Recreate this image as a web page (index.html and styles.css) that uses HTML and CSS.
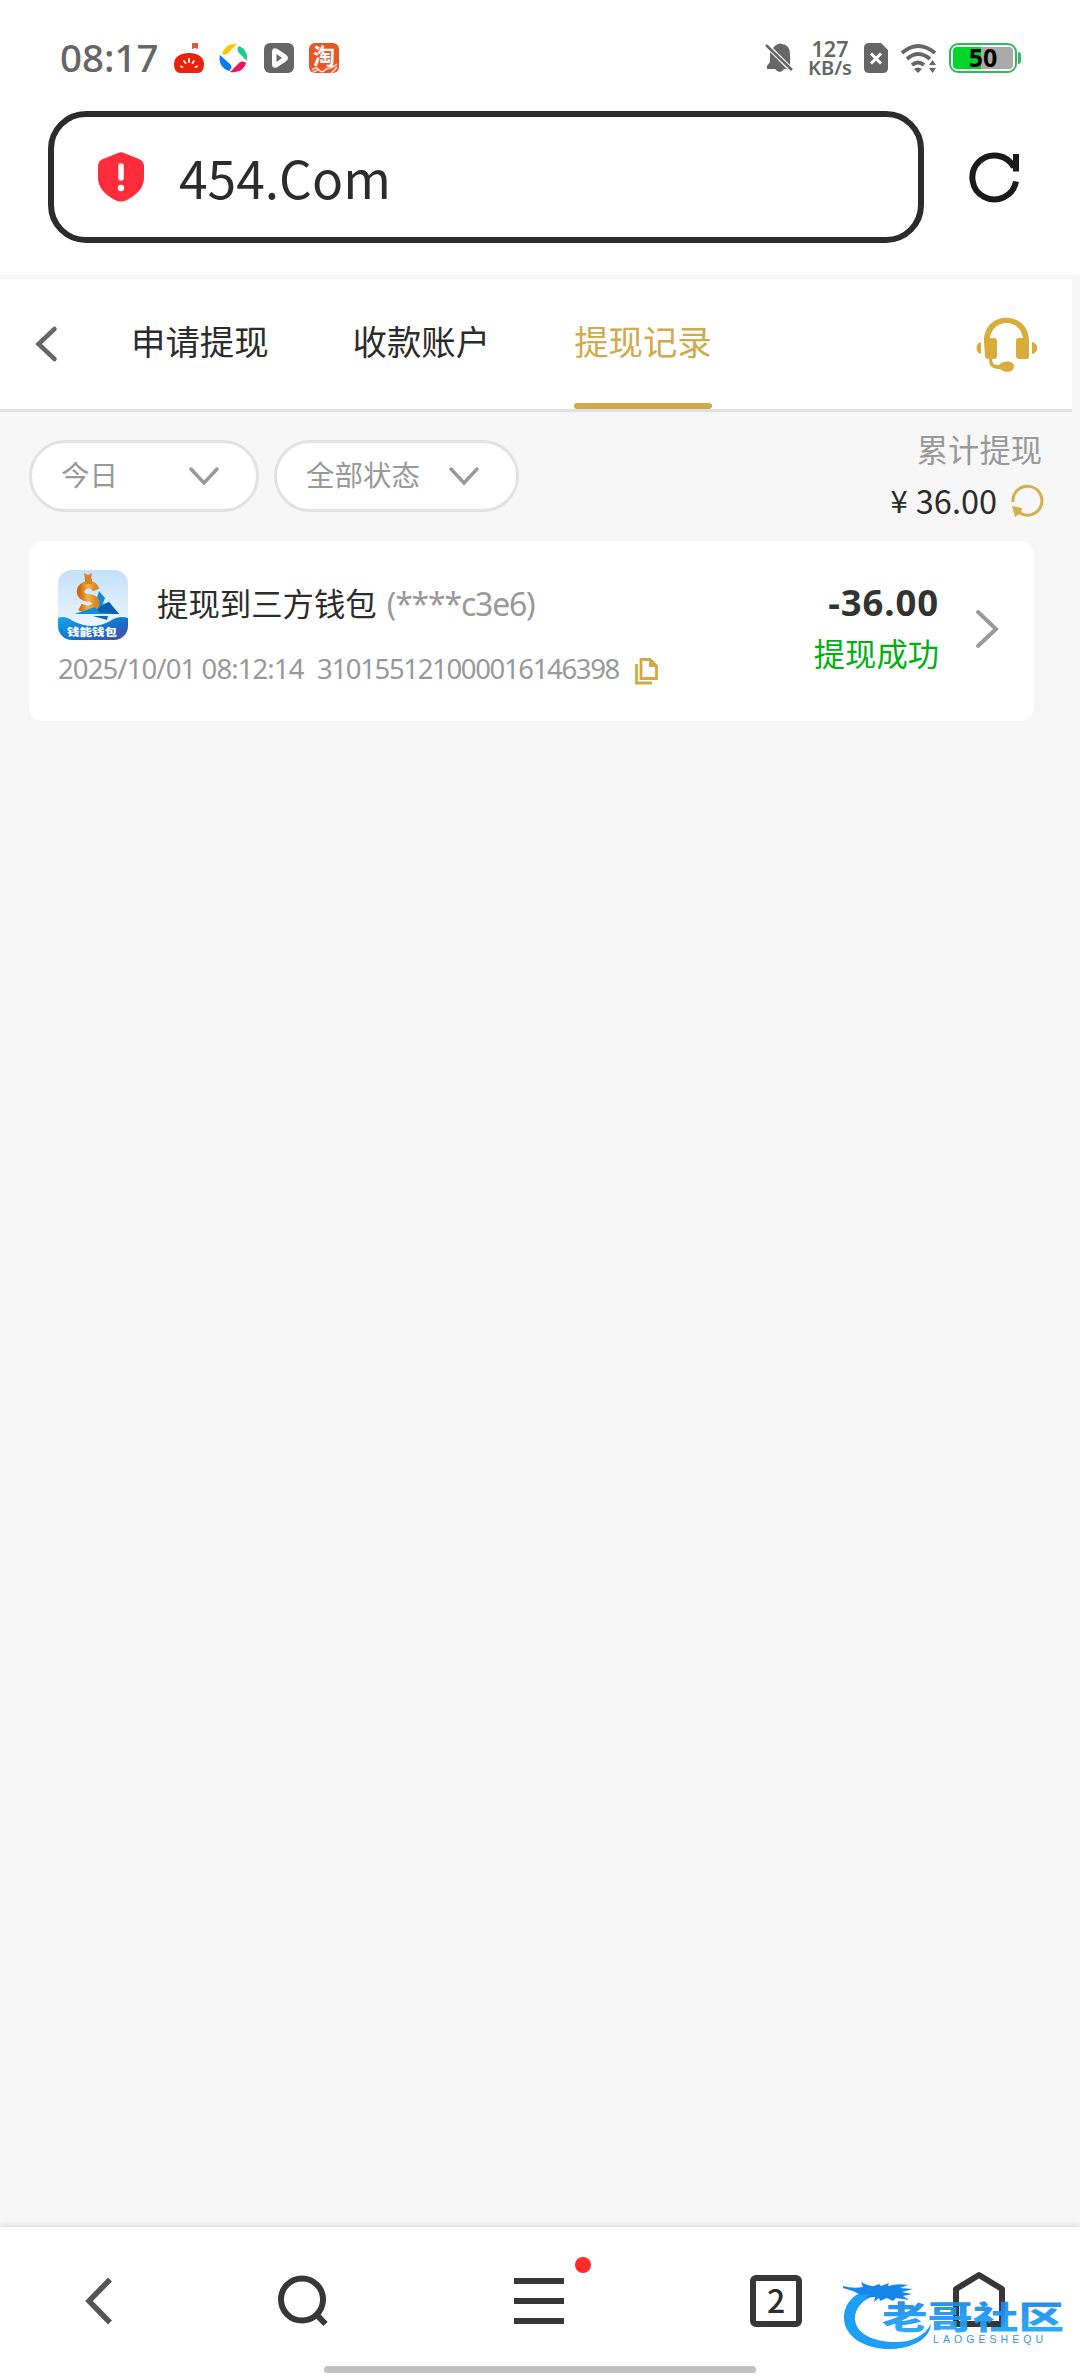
FILE: index.html
```
<!DOCTYPE html>
<html lang="zh-CN">
<head>
    <meta charset="UTF-8">
    <title>提现记录</title>
    <link rel="stylesheet" href="styles.css">
</head>
<body>
    <div class="status-bar">
        <span class="time">08:17</span>
        <div class="apps">
            <svg width="30" height="30" viewBox="0 0 30 30">
                <path d="M18 0h6v6l-3-1-3 1z" fill="#d9573a"/>
                <path d="M15 10c9 0 15 4 15 11 0 5-2 9-6 9H6c-4 0-6-4-6-9 0-7 6-11 15-11z" fill="#e8240c"/>
                <path d="M15 16v3M10 18l1.500 2M20 18l-1.500 2M7 23.500l1.500.5M23 23.500l-1.500.5" stroke="#fff" stroke-width="1.800" stroke-linecap="round"/>
            </svg>
            <svg width="30" height="30" viewBox="0 0 30 30">
                <path d="M3 11C5 4 11 0 18 1L9 10c-2 2-4 2-6 1z" fill="#fdc600"/>
                <path d="M20 3c6 2 9 8 8 15l-8-8c-2-2-2-5 0-7z" fill="#1fc98b"/>
                <path d="M27 20c-2 7-8 10-16 9l9-9c2-2 5-2 7 0z" fill="#f5145b"/>
                <path d="M1 12c-2 7 2 14 9 16 3-2 3-5 1-7z" fill="#0b7cf0"/>
            </svg>
            <svg width="30" height="30" viewBox="0 0 30 30">
                <rect width="30" height="30" rx="6" fill="#666"/>
                <path d="M10 8.500v13q0 2 2 1l9-6q2-1.500 0-3L12 7.500q-2-1-2 1z" fill="#fff" stroke="#fff" stroke-width="4" stroke-linejoin="round"/>
                <path d="M12.500 11v8l5.500-4z" fill="#666"/>
            </svg>
            <svg width="30" height="30" viewBox="0 0 30 30">
                <rect width="30" height="30" rx="6" fill="#ed5426"/>
                <text x="4" y="21" class="tao">淘</text>
                <path d="M3 27q4-4 7 0t7-1q7-1 11-5M22 30q4-3 6-6M4 29l5-2" fill="none" stroke="#fbe0d0" stroke-width="1.500"/>
            </svg>
        </div>
        <div class="signals">
            <svg width="28" height="30" viewBox="0 0 28 30">
                <path d="M12 1q2-1 4 0 8 1 8 10v11L7 5q2-3 5-4zM4 9l17 17h-3q-4 6-9 0H1v-3l3-4z" fill="#666"/>
                <path d="M0 2l26 25" stroke="#666" stroke-width="2.500"/>
            </svg>
            <div class="speed"><span>127</span><span>KB/s</span></div>
            <svg width="24" height="30" viewBox="0 0 24 30">
                <path d="M5 0h12l7 7v18q0 5-5 5H5q-5 0-5-5V5q0-5 5-5z" fill="#666"/>
                <path d="M7 10.500l10 10m0-10l-10 10" stroke="#fff" stroke-width="3"/>
            </svg>
            <svg width="37" height="30" viewBox="0 0 37 30" fill="none" stroke="#666" stroke-width="4">
                <path d="M2 10q16-14 33 0M7 16q11-10 23 0M12 22q6-5 12 0"/>
                <path d="M14 26q4-3 8 0l-4 4zM29 22h7l-3.500-5zM29 25h7l-3.500 5z" fill="#666" stroke="none"/>
            </svg>
            <svg width="73" height="30" viewBox="0 0 73 30">
                <rect x="1" y="1" width="66" height="28" rx="8" fill="#fff" stroke="#2fba5c" stroke-width="2"/>
                <path d="M8 4h24v22H8q-4 0-4-4V8q0-4 4-4z" fill="#00d52b"/>
                <path d="M32 4h28q4 0 4 4v14q0 4-4 4H32z" fill="#aaa"/>
                <path d="M69 9q3 0 3 3v6q0 3-3 3z" fill="#2fba5c"/>
                <text x="34" y="23.500" class="battery">50</text>
            </svg>
        </div>
    </div>

    <div class="address-bar">
        <div class="url">
            <svg width="46" height="50" viewBox="0 0 46 50">
                <path d="M20 1q3-1.500 6 0l15 6q5 2 5 7v12q0 13-17 22-6 3-12 0Q0 39 0 26V14q0-5 5-7z" fill="#ff2d3b"/>
                <path d="M23 14v12" stroke="#fff" stroke-width="5.500" stroke-linecap="round"/>
                <circle cx="23" cy="36" r="3.200" fill="#fff"/>
            </svg>
            <span>454.Com</span>
        </div>
        <svg class="reload" width="50" height="50" viewBox="0 0 50 50" fill="none" stroke="#1a1a1a" stroke-width="6">
            <path d="M46 29.500A22 22 0 1 1 44 15.500"/>
            <path d="M46 2v17.500"/>
        </svg>
    </div>

    <header>
        <svg class="back" width="22" height="36" viewBox="0 0 22 36" fill="none" stroke="#666" stroke-width="4.500" stroke-linecap="round">
            <path d="M18.500 3L2.500 18l16 15"/>
        </svg>
        <nav>
            <a>申请提现</a>
            <a>收款账户</a>
            <a class="active">提现记录</a>
        </nav>
        <svg class="service" width="62" height="56" viewBox="0 0 62 56" fill="#d9ac3c">
            <path d="M8 24C8-7 53-7 53 24v15q0 3-3 3h-7q-3 0-3-3V24q0-3 3-3h4C44 1 17 1 14 21h4q3 0 3 3v15q0 3-3 3h-2c0 5 3 6 7 6 7-6 15-3 15 1 0 6-8 8-14 3-7 0-11-2-11-10-3 0-4-1-4-3z"/>
            <path d="M5 25v12c-6-1-6-11 0-12zM56 25v12c7-1 7-11 0-12z"/>
        </svg>
    </header>

    <main>
        <div class="toolbar">
            <div class="select day">
                <span>今日</span>
                <svg width="30" height="18" viewBox="0 0 30 18"><path d="M2 2l13 14L28 2"/></svg>
            </div>
            <div class="select state">
                <span>全部状态</span>
                <svg width="30" height="18" viewBox="0 0 30 18"><path d="M2 2l13 14L28 2"/></svg>
            </div>
            <div class="summary">
                <span class="label">累计提现</span>
                <div class="total">
                    <span class="yen">¥</span><span>36.00</span>
                    <svg width="32" height="32" viewBox="0 0 32 32">
                        <path d="M2 17A14.500 14.500 0 1 1 8 27.500" fill="none" stroke="#d4af4e" stroke-width="3"/>
                        <path d="M1 21l10 2-1 5-6 4z" fill="#d4af4e"/>
                    </svg>
                </div>
            </div>
        </div>

        <div class="record">
            <div class="info">
                <div class="title">
                    <svg width="70" height="70" viewBox="0 0 70 70">
                        <defs>
                            <linearGradient id="sky" x2="0" y2="1"><stop stop-color="#c3e0fb"/><stop offset="1" stop-color="#f6fbff"/></linearGradient>
                            <linearGradient id="sea" x2="1" y2="1"><stop stop-color="#16a5ee"/><stop offset=".6" stop-color="#146fc9"/><stop offset="1" stop-color="#5149a8"/></linearGradient>
                            <linearGradient id="gold"><stop stop-color="#c96d13"/><stop offset=".5" stop-color="#f7b04e"/><stop offset="1" stop-color="#dc881f"/></linearGradient>
                            <clipPath id="round"><rect width="70" height="70" rx="14"/></clipPath>
                        </defs>
                        <g clip-path="url(#round)">
                            <rect width="70" height="70" fill="url(#sky)"/>
                            <path d="M41 21l6 7-3 8-8 2z" fill="#128ad8"/>
                            <path d="M17 44l34-12 10 12z" fill="#0a8fdf"/>
                            <path d="M51 32l10 12-28-2z" fill="#075fb3"/>
                            <path d="M38 20q-3-7-10-5-7 3-5 9 2 4 9 4 8 2 5 8-5 6-15 1" fill="none" stroke="url(#gold)" stroke-width="7.500"/>
                            <path d="M26 3l4 2 4-2-1 7h-6zM27 9h7v5h-7z" fill="#d98424"/>
                            <path d="M17 44l20-7 6 7z" fill="#0a8fdf"/>
                            <path d="M35 46h15l-1 4z" fill="#1166b1"/>
                            <path d="M0 48q7-3 15 3 20 10 37 0 9-6 18-3v22H0z" fill="url(#sea)"/>
                            <text x="9" y="66" class="wallet" textLength="50" lengthAdjust="spacingAndGlyphs">钱能钱包</text>
                        </g>
                    </svg>
                    <span class="name">提现到三方钱包</span>
                    <span class="account">(****c3e6)</span>
                </div>
                <div class="meta">
                    <span class="date">2025/10/01 08:12:14</span>
                    <span class="order">310155121000016146398</span>
                    <svg width="23" height="27" viewBox="0 0 23 27" fill="none" stroke="#d0aa45" stroke-width="2.800">
                        <path d="M6 1.500h9L21.500 8v12.500H6z"/>
                        <path d="M14 1v8h8z" fill="#d0aa45" stroke="none"/>
                        <path d="M1.500 6v19H17"/>
                    </svg>
                </div>
            </div>
            <div class="amount">
                <strong>-36.00</strong>
                <span>提现成功</span>
            </div>
            <svg class="more" width="24" height="40" viewBox="0 0 24 40" fill="none" stroke="#999" stroke-width="4" stroke-linecap="round">
                <path d="M3 3l18 17L3 37"/>
            </svg>
        </div>
    </main>

    <footer>
        <svg class="f-back" width="28" height="48" viewBox="0 0 28 48" fill="none" stroke="#555" stroke-width="5.500">
            <path d="M25 2.500L4 24l21 21.500"/>
        </svg>
        <svg class="f-search" width="52" height="52" viewBox="0 0 52 52" fill="none" stroke="#373737" stroke-width="6">
            <ellipse cx="24" cy="24.500" rx="21" ry="21"/>
            <path d="M38 39l9.500 10"/>
        </svg>
        <div class="f-menu">
            <svg width="50" height="46" viewBox="0 0 50 46"><path d="M0 0h50v6H0zM0 20h50v6H0zM0 40h50v6H0z" fill="#373737"/></svg>
            <i class="dot"></i>
        </div>
        <div class="f-tabs">2</div>
        <div class="f-home">
            <svg width="52" height="56" viewBox="0 0 52 56" fill="none" stroke="#373737" stroke-width="6" stroke-linejoin="round">
                <path d="M3 18L26 4l23 14v35H3z"/>
            </svg>
            <svg class="watermark" width="224" height="72" viewBox="0 0 224 72">
                <defs>
                    <linearGradient id="wm" x2="0" y2="1"><stop stop-color="#1681e6"/><stop offset="1" stop-color="#26aaf7"/></linearGradient>
                </defs>
                <path d="M31 7C10 12 2 24 2 37c0 19 22 32 48 31 22-1 38-11 39-25-7 13-21 19-39 18-20-1-37-9-37-24 0-9 7-18 20-23z" fill="#1c9ff5"/>
                <path d="M1 5q10 3 20 1l-2-5q7 4 13 4l5-2 2 2 8-3-1 3q10-3 20-1l-8 3 13 1-11 3 10 2-9 2 6 4-13-2-3 3-6-3-7 3-1-3-5 4 1-5-9 1 3-4-8 1q-9-5-18-7z" fill="#1687e8"/>
                <text x="40" y="48" class="wm-name" textLength="182" lengthAdjust="spacingAndGlyphs">老哥社区</text>
                <text x="91" y="62" class="wm-sub" textLength="110">LAOGESHEQU</text>
            </svg>
        </div>
        <div class="home-indicator"></div>
    </footer>
</body>
</html>
```
FILE: styles.css
```
* {
    box-sizing: border-box;
}

body {
    margin: 0;
    height: 2376px;
    display: flex;
    flex-direction: column;
    overflow: hidden;
    background: #f7f7f7;
    font-family: "Noto Sans CJK SC", sans-serif;
    color: #2c2c2c;
}

svg {
    display: block;
    flex-shrink: 0;
    overflow: visible;
}

/* status bar */
.status-bar {
    height: 111px;
    padding: 5px 60px 0;
    display: flex;
    align-items: flex-start;
    background: #fff;
    font-family: "Noto Sans", sans-serif;
    color: #666;
}

.time {
    margin-top: 22px;
    width: 114px;
    font-size: 38.5px;
    line-height: 60px;
    font-weight: 500;
}

.apps {
    display: flex;
    gap: 15px;
    margin-top: 38px;
}

.tao {
    font: bold 22px "Noto Sans CJK SC", sans-serif;
    fill: #fff;
}

.signals {
    display: flex;
    margin: 38px -2px 0 auto;
}

.speed {
    width: 48px;
    margin: -4px 10px 0 12px;
    display: flex;
    flex-direction: column;
    align-items: center;
    font-size: 21.5px;
    line-height: 19px;
    font-weight: 600;
}

.speed span + span {
    font-size: 20px;
}

.signals svg + svg {
    margin-left: 12px;
}

.battery {
    font: bold 25px "Open Sans", sans-serif;
    text-anchor: middle;
    fill: #000;
}

/* address bar */
.address-bar {
    height: 168px;
    padding: 0 60px 0 48px;
    display: flex;
    background: #fff;
    border-bottom: 4px solid #f6f6f6;
}

.url {
    width: 876px;
    height: 132px;
    padding-left: 44px;
    display: flex;
    align-items: center;
    border: 6px solid #2c2c2c;
    border-radius: 38px;
    font-size: 51.5px;
    line-height: 70px;
}

.url span {
    margin: -1px 0 0 35px;
}

.reload {
    margin: 41px 0 0 46px;
}

/* page header */
header {
    width: 1072px;
    height: 133px;
    padding-left: 36px;
    display: flex;
    background: #fff;
    border-bottom: 3px solid #e1e1e1;
}

.back {
    margin-top: 47px;
}

nav {
    display: flex;
    gap: 84px;
    margin-left: 73px;
}

nav a {
    height: 130px;
    font-size: 34.4px;
    line-height: 123px;
}

nav .active {
    position: relative;
    color: #cfab4c;
}

nav .active::after {
    content: "";
    position: absolute;
    left: 0;
    bottom: 0;
    width: 100%;
    height: 6px;
    border-radius: 3px;
    background: #cfab4c;
}

.service {
    margin: 38px 34px 0 auto;
}

main {
    flex: 1;
}

.toolbar {
    height: 129px;
    padding-left: 29px;
    display: flex;
}

.select {
    height: 72px;
    margin: 28px 15px 0 0;
    padding: 0 37px 0 29px;
    display: flex;
    align-items: center;
    justify-content: space-between;
    border: 3px solid #e2e2e2;
    border-radius: 36px;
    background: #fff;
    font-size: 28.5px;
    line-height: 40px;
    color: #999;
}

.select span {
    margin-top: -4px;
}

.select path {
    fill: none;
    stroke: #999;
    stroke-width: 3.5;
    stroke-linecap: round;
}

.day {
    width: 230px;
}

.state {
    width: 245px;
}

.summary {
    margin: 11px 37px 0 auto;
    display: flex;
    flex-direction: column;
    align-items: flex-end;
    line-height: 52px;
}

.label {
    margin-right: 1px;
    font-size: 31.3px;
    color: #999;
}

.total {
    display: flex;
    align-items: center;
    margin-top: -1px;
    font-size: 32.5px;
}

.yen {
    margin-right: 8px;
    font-size: 31px;
}

.total svg {
    margin: 2px 0 0 14px;
}

/* withdraw record */
.record {
    width: 1005px;
    height: 180px;
    margin-left: 29px;
    padding: 29px 35px 0 29px;
    display: flex;
    background: #fff;
    border-radius: 14px;
}

.title {
    display: flex;
    height: 70px;
    font-size: 31.4px;
    line-height: 66px;
}

.name {
    margin-left: 29px;
}

.account {
    margin-left: 10px;
    font-family: "Noto Sans", sans-serif;
    font-size: 32px;
    letter-spacing: -1.2px;
    line-height: 68px;
    color: #999;
}

.meta {
    display: flex;
    height: 58px;
    font-family: "Noto Sans", sans-serif;
    font-size: 27.5px;
    line-height: 58px;
    color: #999;
}

.date {
    width: 259px;
    letter-spacing: -0.9px;
    white-space: nowrap;
}

.order {
    width: 318px;
    letter-spacing: -1.35px;
}

.meta svg {
    margin-top: 18px;
}

.amount {
    margin: 0 36px 0 auto;
    padding-top: 6px;
    display: flex;
    flex-direction: column;
    align-items: flex-end;
    font-size: 31.3px;
    line-height: 52px;
    color: #00b112;
}

.amount strong {
    font-family: "Noto Sans", sans-serif;
    font-size: 36.5px;
    font-weight: 700;
    letter-spacing: 0.9px;
    color: #333;
}

.amount span {
    margin-top: -1px;
}

.more {
    margin-top: 39px;
}

/* browser toolbar */
footer {
    position: relative;
    height: 149px;
    display: flex;
    background: #fff;
    box-shadow: 0 -1px 6px rgba(0, 0, 0, 0.14);
}

.f-back {
    margin: 50px 0 0 85px;
}

.f-search {
    margin: 48px 0 0 165px;
}

.f-menu {
    position: relative;
    margin: 51px 0 0 184px;
}

.dot {
    position: absolute;
    left: 61px;
    top: -21px;
    width: 16px;
    height: 16px;
    border-radius: 50%;
    background: #ff2a2a;
}

.f-tabs {
    width: 52px;
    height: 52px;
    margin: 48px 0 0 186px;
    border: 6px solid #373737;
    border-radius: 6px;
    font-size: 32px;
    font-weight: 500;
    line-height: 37px;
    text-align: center;
}

.f-home {
    position: relative;
    margin: 44px 0 0 151px;
}

.watermark {
    position: absolute;
    left: -111px;
    top: 10px;
}

.wm-name {
    font: 900 32px "Noto Sans CJK SC", sans-serif;
    fill: url(#wm);
    fill-opacity: 0.94;
}

.wm-sub {
    font: 10.5px "Liberation Sans", sans-serif;
    fill: #3795de;
}

.wallet {
    font: 900 10.5px "Noto Sans CJK SC", sans-serif;
    fill: #fff;
}

.home-indicator {
    position: absolute;
    left: 324px;
    bottom: 3px;
    width: 432px;
    height: 7px;
    border-radius: 4px;
    background: #c1c1c1;
}
```
